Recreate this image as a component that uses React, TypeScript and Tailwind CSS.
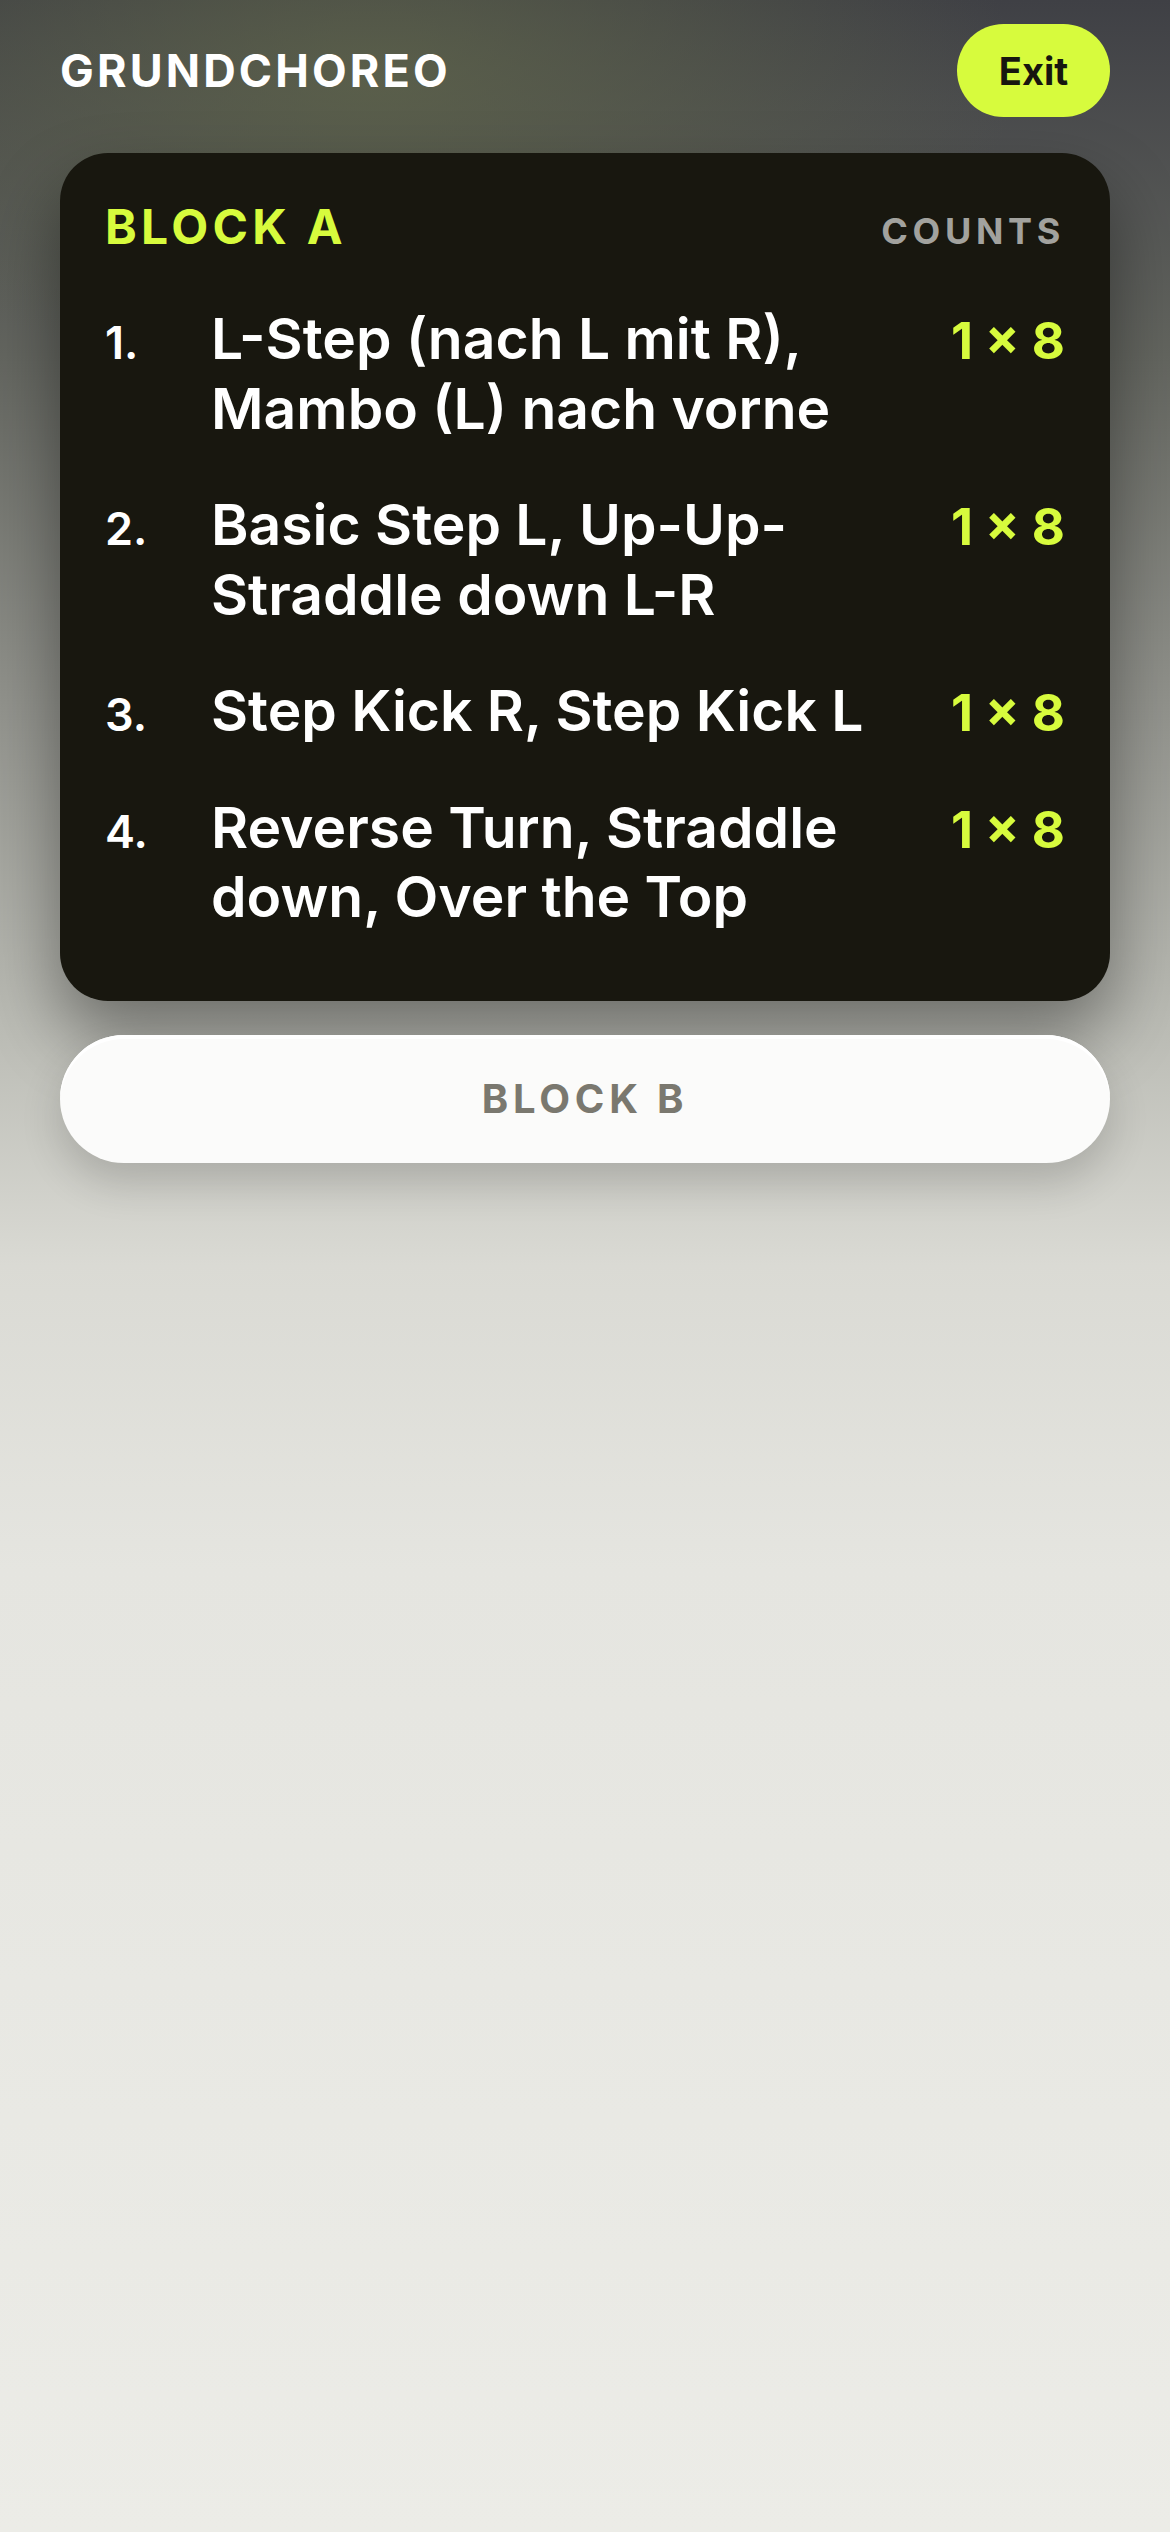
const steps = [
  { n: "1.", text: "L-Step (nach L mit R), Mambo (L) nach vorne", count: "1 × 8" },
  { n: "2.", text: "Basic Step L, Up-Up-Straddle down L-R", count: "1 × 8" },
  { n: "3.", text: "Step Kick R, Step Kick L", count: "1 × 8" },
  { n: "4.", text: "Reverse Turn, Straddle down, Over the Top", count: "1 × 8" },
];

export default function App() {
  return (
    <div className="min-h-screen px-[60px] font-['Inter',sans-serif] bg-[radial-gradient(ellipse_55%_12%_at_32%_3%,rgba(96,102,74,0.75),transparent),linear-gradient(180deg,#3f4045_0%,#63655f_14%,#92938d_28%,#b9bab3_40%,#dadad4_50%,#e5e5e0_62%,#ecece7_100%)]">
      <header className="flex items-center justify-between pt-[24px]">
        <h1 className="text-[45px] font-bold leading-none tracking-[0.07em] text-white">
          GRUNDCHOREO
        </h1>
        <button className="flex h-[93px] w-[153px] items-center justify-center rounded-full bg-[#d7fb3d] text-[38px] font-bold leading-none text-[#17160f]">
          Exit
        </button>
      </header>

      <section className="mt-[36px] rounded-[48px] bg-[#18170f] px-[45px] pt-[50px] pb-[69px] shadow-[0_36px_70px_rgba(0,0,0,0.4)]">
        <div className="flex items-baseline justify-between">
          <h2 className="text-[48px] font-bold leading-[48px] tracking-[0.09em] text-[#d7fb3d]">
            BLOCK A
          </h2>
          <span className="text-[36px] font-bold leading-none tracking-[0.13em] text-[#a2a29e]">
            COUNTS
          </span>
        </div>

        <ol className="mt-[53px] flex flex-col gap-[47px]">
          {steps.map((s) => (
            <li key={s.n} className="flex items-baseline">
              <span className="w-[106px] shrink-0 text-[45px] font-semibold leading-none text-white">
                {s.n}
              </span>
              <span className="flex-1 text-[57px] font-semibold leading-[69.5px] text-white">
                {s.text}
              </span>
              <span className="ml-[32px] shrink-0 text-[51px] font-bold leading-none text-[#d7fb3d]">
                {s.count}
              </span>
            </li>
          ))}
        </ol>
      </section>

      <button className="mt-[34px] flex h-[128px] w-full items-center justify-center rounded-full bg-[#fbfbfa] text-[40px] font-bold leading-none tracking-[0.12em] text-[#7a786f] shadow-[0_20px_40px_rgba(0,0,0,0.16),inset_0_4px_0_#ffffff]">
        BLOCK B
      </button>
    </div>
  );
}
